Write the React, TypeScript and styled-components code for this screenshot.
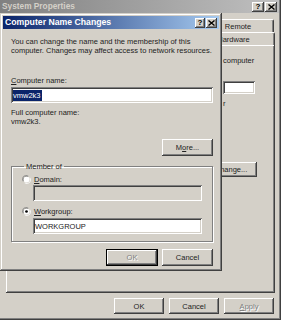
import React from 'react';
import styled, { createGlobalStyle, css } from 'styled-components';

const face = '#d4d0c8';
const shade = '#808080';
const dark = '#404040';

const GlobalStyle = createGlobalStyle`
  html, body {
    margin: 0;
    padding: 0;
    overflow: hidden;
    background: ${face};
  }
  body {
    font-family: 'Liberation Sans', Arial, sans-serif;
    font-size: 7.5px;
    color: #222;
  }
`;

const windowEdge = css`
  box-shadow: inset -1px -1px 0 ${dark}, inset 1px 1px 0 ${face},
    inset -2px -2px 0 ${shade}, inset 2px 2px 0 #fff;
`;

const buttonEdge = css`
  box-shadow: inset -1px -1px 0 ${dark}, inset 1px 1px 0 #fff,
    inset -2px -2px 0 ${shade}, inset 2px 2px 0 ${face};
`;

const sunkenEdge = css`
  box-shadow: inset 1px 1px 0 ${shade}, inset -1px -1px 0 #fff,
    inset 2px 2px 0 ${dark}, inset -2px -2px 0 ${face};
`;

const Desktop = styled.div`
  position: relative;
  width: 281px;
  height: 320px;
  overflow: hidden;
`;

/* ---------- back window: System Properties ---------- */

const BackWindow = styled.div`
  width: 281px;
  height: 320px;
  box-sizing: border-box;
  padding: 0 2px 2px 0;
  display: flex;
  flex-direction: column;
  background: ${face};
  box-shadow: inset -1px -1px 0 ${dark}, inset -2px -2px 0 ${shade};
`;

const TitleBar = styled.div<{ $active?: boolean }>`
  height: 13px;
  flex: none;
  display: flex;
  align-items: center;
  justify-content: space-between;
  padding: 0 2px;
  background: ${(p) =>
    p.$active
      ? 'linear-gradient(to right, #0a246a, #a6caf0)'
      : 'linear-gradient(to right, #808080, #c0c0c0)'};
  color: ${(p) => (p.$active ? '#fff' : face)};
  font-weight: bold;
  font-size: ${(p) => (p.$active ? 8.7 : 8.3)}px;
  line-height: 13px;
  white-space: nowrap;
`;

const CaptionButtons = styled.div`
  display: flex;
  gap: 1px;
`;

const CaptionButton = styled.div<{ $w: number }>`
  width: ${(p) => p.$w}px;
  height: 10px;
  display: flex;
  align-items: center;
  justify-content: center;
  background: ${face};
  color: #000;
  font-size: 8px;
  font-weight: bold;
  line-height: 10px;
  ${buttonEdge};
`;

const BackBody = styled.div`
  flex: 1;
  display: flex;
  flex-direction: column;
  padding: 6px 4px 4px 6px;
`;

const TabRow = styled.div<{ $inset: number }>`
  display: flex;
  justify-content: flex-end;
  height: 13px;
  padding-right: ${(p) => p.$inset}px;
`;

const Tab = styled.div<{ $w: number }>`
  width: ${(p) => p.$w}px;
  box-sizing: border-box;
  text-align: center;
  line-height: 13px;
  border-top: 1px solid #fff;
  border-left: 1px solid #fff;
  border-right: 1px solid ${dark};
  box-shadow: inset -1px 0 0 ${shade};
  border-radius: 2px 2px 0 0;
  white-space: nowrap;
  overflow: hidden;
`;

const Panel = styled.div`
  flex: 1;
  box-shadow: inset -1px -1px 0 ${dark}, inset 1px 1px 0 #fff,
    inset -2px -2px 0 ${shade};
  padding: 11px 10px 0 10px;
  display: grid;
  grid-template-columns: 205px 1fr;
  grid-auto-rows: min-content;
  line-height: 9px;
  white-space: nowrap;
`;

const Cell = styled.div<{ $top?: number }>`
  grid-column: 2;
  margin-top: ${(p) => p.$top ?? 0}px;
  padding-left: 2px;
`;

const SmallField = styled.div`
  height: 13px;
  margin-right: 10px;
  background: #fff;
  ${sunkenEdge};
`;

const ChangeRow = styled.div`
  grid-column: 1 / 3;
  display: flex;
  justify-content: flex-end;
  margin-top: 54px;
  padding-right: 8px;
`;

const BackButtons = styled.div`
  display: flex;
  justify-content: flex-end;
  gap: 5px;
  margin-top: 5px;
  padding-right: 1px;
  height: 16px;
`;

const Button = styled.div<{ $w?: number; $default?: boolean; $disabled?: boolean; $h?: number }>`
  width: ${(p) => p.$w ?? 50}px;
  height: ${(p) => p.$h ?? 16}px;
  box-sizing: border-box;
  display: flex;
  align-items: center;
  justify-content: center;
  background: ${face};
  color: ${(p) => (p.$disabled ? shade : '#222')};
  text-shadow: ${(p) => (p.$disabled ? '1px 1px 0 #fff' : 'none')};
  ${(p) =>
    p.$default
      ? css`
          box-shadow: inset 0 0 0 1px #000, inset -2px -2px 0 ${dark},
            inset 2px 2px 0 #fff, inset -3px -3px 0 ${shade};
        `
      : buttonEdge};
  white-space: nowrap;
`;

/* ---------- front dialog: Computer Name Changes ---------- */

const Dialog = styled.div`
  position: absolute;
  left: 0;
  top: 13px;
  width: 222px;
  height: 258px;
  box-sizing: border-box;
  padding: 3px;
  background: ${face};
  display: flex;
  flex-direction: column;
  ${windowEdge};
`;

const DialogBody = styled.div`
  flex: 1;
  display: flex;
  flex-direction: column;
  padding: 8px 6px 0 8px;
  line-height: 9px;
`;

const Text = styled.div<{ $top?: number }>`
  margin-top: ${(p) => p.$top ?? 0}px;
  white-space: nowrap;
`;

const Field = styled.div<{ $disabled?: boolean; $top?: number }>`
  height: 16px;
  box-sizing: border-box;
  margin-top: ${(p) => p.$top ?? 0}px;
  padding: 0 2px;
  display: flex;
  align-items: center;
  background: ${(p) => (p.$disabled ? face : '#fff')};
  ${sunkenEdge};
  white-space: nowrap;
`;

const Selected = styled.span`
  background: #0a246a;
  color: #fff;
  padding: 0 1px 0 0;
  line-height: 11px;
`;

const RightRow = styled.div<{ $top: number }>`
  display: flex;
  justify-content: flex-end;
  gap: 4px;
  margin-top: ${(p) => p.$top}px;
`;

const Group = styled.fieldset`
  margin: 6px 0 0 0;
  padding: 1px 10px 7px 10px;
  border: 1px solid ${shade};
  box-shadow: inset 1px 1px 0 #fff, 1px 1px 0 #fff;
  min-width: 0;
`;

const Legend = styled.legend`
  margin-left: 2px;
  padding: 0 2px;
  line-height: 9px;
`;

const Option = styled.div<{ $top?: number }>`
  display: flex;
  align-items: center;
  gap: 3px;
  margin-top: ${(p) => p.$top ?? 0}px;
  height: 9px;
`;

const OptionField = styled(Field)`
  margin-left: 11px;
`;

const Radio = ({ checked }: { checked?: boolean }) => (
  <svg width="9" height="9" viewBox="0 0 12 12">
    <path d="M1.5 8.5 A5 5 0 0 1 8.5 1.5" fill="none" stroke={shade} strokeWidth="1" />
    <path d="M2.5 8 A4 4 0 0 1 8 2.5" fill="none" stroke={dark} strokeWidth="1" />
    <path d="M10.5 3.5 A5 5 0 0 1 3.5 10.5" fill="none" stroke="#fff" strokeWidth="1" />
    <circle cx="6" cy="6" r="4" fill="#fff" />
    {checked && <circle cx="6" cy="6" r="1.8" fill="#000" />}
  </svg>
);

const CloseGlyph = () => (
  <svg width="7" height="6" viewBox="0 0 8 7">
    <path d="M0.5 0.5 L7.5 6.5 M7.5 0.5 L0.5 6.5" stroke="#000" strokeWidth="1.5" />
  </svg>
);

export default function App() {
  return (
    <>
      <GlobalStyle />
      <Desktop>
        <BackWindow>
          <TitleBar>
            <span>System Properties</span>
            <CaptionButtons>
              <CaptionButton $w={12}>?</CaptionButton>
              <CaptionButton $w={12}>
                <CloseGlyph />
              </CaptionButton>
            </CaptionButtons>
          </TitleBar>
          <BackBody>
            <TabRow $inset={1}>
              <Tab $w={72}>Remote</Tab>
            </TabRow>
            <TabRow $inset={0}>
              <Tab $w={83}>Hardware</Tab>
            </TabRow>
            <Panel>
              <Cell>computer</Cell>
              <Cell $top={16}>
                <SmallField />
              </Cell>
              <Cell $top={5}>r</Cell>
              <ChangeRow>
                <Button $w={52} $h={15}>Change...</Button>
              </ChangeRow>
            </Panel>
            <BackButtons>
              <Button>OK</Button>
              <Button>Cancel</Button>
              <Button $disabled>
                <u>A</u>pply
              </Button>
            </BackButtons>
          </BackBody>
        </BackWindow>

        <Dialog>
          <TitleBar $active>
            <span>Computer Name Changes</span>
            <CaptionButtons>
              <CaptionButton $w={10}>?</CaptionButton>
              <CaptionButton $w={11}>
                <CloseGlyph />
              </CaptionButton>
            </CaptionButtons>
          </TitleBar>
          <DialogBody>
            <Text>You can change the name and the membership of this</Text>
            <Text>computer. Changes may affect access to network resources.</Text>
            <Text $top={21}>
              <u>C</u>omputer name:
            </Text>
            <Field $top={2}>
              <Selected>vmw2k3</Selected>
            </Field>
            <Text $top={5}>Full computer name:</Text>
            <Text>vmw2k3.</Text>
            <RightRow $top={13}>
              <Button $w={51} $h={17}>
                M<u>o</u>re...
              </Button>
            </RightRow>
            <Group>
              <Legend>Member of</Legend>
              <Option $top={3}>
                <Radio />
                <span>
                  <u>D</u>omain:
                </span>
              </Option>
              <OptionField $disabled $top={1} />
              <Option $top={6}>
                <Radio checked />
                <span>
                  <u>W</u>orkgroup:
                </span>
              </Option>
              <OptionField $top={2}>WORKGROUP</OptionField>
            </Group>
            <RightRow $top={7}>
              <Button $w={52} $h={17} $default $disabled>
                OK
              </Button>
              <Button $w={51} $h={17}>
                Cancel
              </Button>
            </RightRow>
          </DialogBody>
        </Dialog>
      </Desktop>
    </>
  );
}
